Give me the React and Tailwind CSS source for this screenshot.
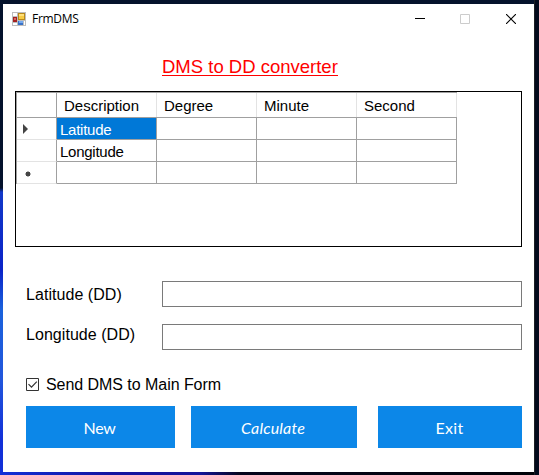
import React from "react";

const columns = ["Description", "Degree", "Minute", "Second"];
const rows = ["Latitude", "Longitude", ""];

function AppIcon() {
  return (
    <svg width="14" height="14" viewBox="0 0 14 14" shapeRendering="crispEdges">
      <path d="M0 0h14v14H0z" fill="#bdbdbd" />
      <path d="M1 1h4v3H1zM1 11h4v2H1zM12 9h1v4h-1z" fill="#fff" />
      <path d="M6 1h7v7H6z" fill="#b8891c" />
      <path d="M7 2h5v5H7z" fill="#f7cb45" />
      <path d="M7 2h5v2H7z" fill="#ffe07a" />
      <path d="M1 5h4v5H1z" fill="#a52020" />
      <path d="M2 6h2v2H2z" fill="#d66a5e" />
      <path d="M6 9h5v4H6z" fill="#3972c8" />
      <path d="M7 9h4v2H7z" fill="#75a9ee" />
    </svg>
  );
}

function Marker({ index }) {
  if (index === 0) return <svg width="5" height="10" className="ml-[6px]"><path d="M0 0L5 5L0 10z" fill="#444" /></svg>;
  if (index === 2) return <svg width="6" height="6" viewBox="0 0 6 6" className="ml-[8px] mt-[3px]"><path d="M3 0v6M0 3h6" stroke="#666" strokeWidth="1" /><path d="M1 1h4v4H1z" fill="#444" /></svg>;
  return null;
}

export default function App() {
  return (
    <div className="h-[475px] w-[539px] overflow-hidden bg-[linear-gradient(to_right,transparent_0,transparent_534px,#1c1f24_534px,#1c1f24_535px,#020a1c_535px),linear-gradient(to_right,transparent_0,#1414a0_110px,#14149a_200px,#05051c_240px,#000208_539px),linear-gradient(to_bottom,#04122c_0,#04122c_188px,#1238c8_192px,#0b24c8_270px,#1a62dc_310px,#2256dc_380px,#1230d8_440px,#1230d8_475px)] bg-[position:0_0,0_472px,0_0] bg-[size:539px_475px,539px_3px,539px_475px] bg-no-repeat pl-[3px] pt-[4px] font-['Liberation_Sans',Arial,sans-serif] text-black">
      <div className="h-[468px] w-[531px] bg-white">
        <header className="flex h-[29px] items-center">
          <div className="ml-[9px]"><AppIcon /></div>
          <span className="ml-[6px] font-['Open_Sans',sans-serif] text-[12px] leading-none tracking-[-0.3px]">FrmDMS</span>
          <div className="ml-auto flex items-center">
            <svg width="10" height="10" className="mr-[35px]"><path d="M0 4.5h10" stroke="#000" /></svg>
            <svg width="10" height="10" className="mr-[36px]"><path d="M.5.5h9v9h-9z" fill="none" stroke="#ccc" /></svg>
            <svg width="10" height="10" className="mr-[18px]"><path d="M0 0l10 10M10 0L0 10" stroke="#000" strokeWidth="1.1" /></svg>
          </div>
        </header>
        <h1 className="ml-[159px] mt-[22px] h-[36px] whitespace-nowrap text-[18.5px] leading-[24px] text-[#f00]">
          <span className="block h-[21px] w-[176px] border-b border-[#f00]">DMS to DD converter</span>
        </h1>
        <section className="ml-[12px] h-[156px] w-[507px] border border-black">
          <div className="w-[441px] text-[15px] leading-[24px]">
            <div className="flex h-[26px] border-t border-l border-b border-[#a0a0a0]">
              <div className="w-[40px] border-r border-[#a0a0a0]" />
              {columns.map((name) => (
                <div key={name} className="w-[100px] border-r border-[#e3e3e3] pl-[7px] pt-[1px]">{name}</div>
              ))}
            </div>
            {rows.map((name, r) => (
              <div key={r} className="flex h-[22px] border-l border-[#a0a0a0]">
                <div className="flex w-[40px] items-center border-r border-b border-r-[#a0a0a0] border-b-[#e3e3e3]"><Marker index={r} /></div>
                {columns.map((column, c) => (
                  <div key={column} className={"w-[100px] border-r border-b border-[#a0a0a0] pl-[3px] tracking-[-0.25px] " + (r === 0 && c === 0 ? "bg-[#0078d7] text-white" : "")}>
                    {c === 0 ? name : ""}
                  </div>
                ))}
              </div>
            ))}
          </div>
        </section>
        <div className="mt-[34px] flex h-[26px]">
          <label htmlFor="lat" className="ml-[23px] w-[136px] pt-[2px] text-[16px] leading-[24px] tracking-[0.05px]">Latitude (DD)</label>
          <input id="lat" className="h-[26px] w-[360px] border border-[#7a7a7a] outline-none" />
        </div>
        <div className="mt-[17px] flex h-[26px]">
          <label htmlFor="lon" className="-mt-[1px] ml-[23px] w-[136px] text-[16px] leading-[24px] tracking-[0.05px]">Longitude (DD)</label>
          <input id="lon" className="h-[26px] w-[360px] border border-[#7a7a7a] outline-none" />
        </div>
        <div className="ml-[23px] mt-[23px] flex h-[24px]">
          <svg width="13" height="13" className="mt-[5px]"><path d="M.5.5h12v12H.5z" fill="white" stroke="#333" /><path d="M2.5 6.2l3 3L10.8 3.7" fill="none" stroke="#333" strokeWidth="1.2" /></svg>
          <span className="ml-[7px] text-[16px] leading-[24px] tracking-[-0.05px]">Send DMS to Main Form</span>
        </div>
        <div className="ml-[23px] mt-[9px] flex h-[42px] font-['Lato',sans-serif] text-[16px] leading-[24px] text-white">
          <button className="w-[149px] bg-[#0c87e8] pr-[2px] pt-[1px] tracking-[-0.3px]">New</button>
          <button className="ml-[16px] w-[166px] bg-[#0c87e8] pr-[2px] pt-[1px] italic tracking-[0.2px]">Calculate</button>
          <button className="ml-[21px] w-[144px] bg-[#0c87e8] pr-[1px] pt-[1px] tracking-[0.3px]">Exit</button>
        </div>
      </div>
    </div>
  );
}
